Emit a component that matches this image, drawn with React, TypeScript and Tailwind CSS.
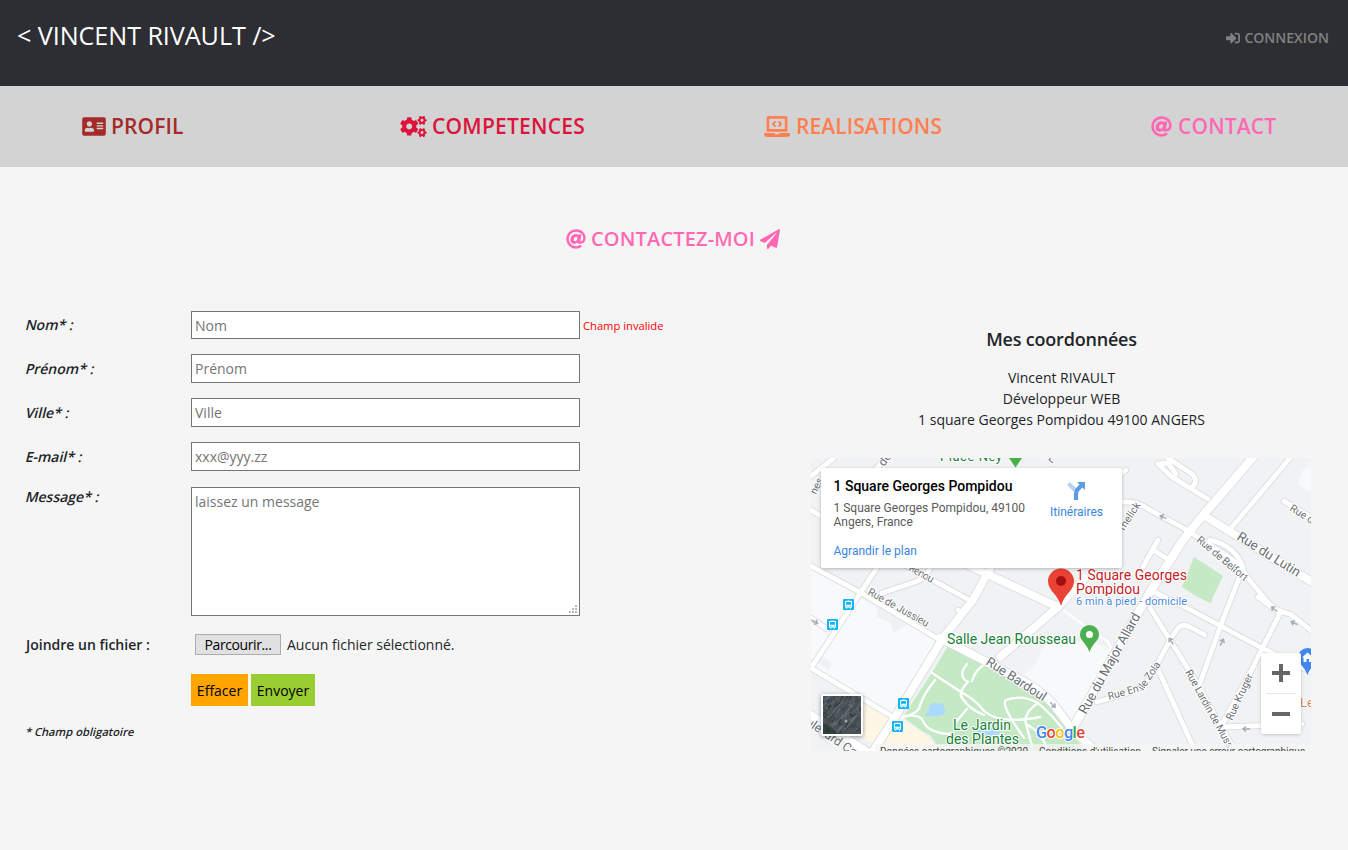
import React from "react";
import { FaAddressCard, FaCogs, FaLaptopCode, FaAt, FaPaperPlane, FaSignInAlt } from "react-icons/fa";

const minorRoads = [
  "M811 566 L865 595 L940 640",
  "M882 593 L915 582 Q924 579 927 574 L932 564",
  "M905 565 L971 601",
  "M811 510 L824 518",
  "M811 476 L834 458",
  "M868 478 L886 458",
  "M811 618 L827 629",
  "M1122 502 Q1138 501 1150 510 L1187 530",
  "M1187 530 L1230 558 Q1242 567 1247 577 L1266 600 Q1274 611 1290 614 L1312 631",
  "M1210 540 Q1236 546 1243 568 L1222 622 L1200 683",
  "M1158 540 L1143 567",
  "M1153 550 L1168 559",
  "M1158 464 L1172 477 L1208 499",
  "M1158 464 L1168 463 L1176 474",
  "M1168 458 L1192 474 Q1199 481 1192 487",
  "M1150 590 L1187 608 L1260 647 L1312 672",
  "M1150 608 L1170 640 L1197 683 L1222 728 L1235 751",
  "M1170 640 L1152 674 Q1144 689 1124 694 L1097 702",
  "M1157 667 L1195 751",
  "M1170 640 L1178 628 Q1183 623 1190 627 L1205 635",
  "M1280 613 L1250 673 L1223 723",
  "M1223 727 L1302 724",
  "M1258 597 L1280 613",
  "M1284 501 L1312 518",
  "M1126 470 L1112 482",
  "M958 610 L963 613",
  "M1232 527 L1290 458",
  "M882 560 L811 668",
  "M811 668 L893 717",
];

const majorRoads = [
  "M872 753 L897 714 L943 638 Q968 606 973 600 L992 565",
  "M811 715 L872 755",
  "M940 638 L985 661 L1025 682 Q1048 695 1060 713 L1072 729 L1100 755",
  "M955 559 L1058 607",
  "M1000 657 L1058 607 L1085 578",
  "M1203 515 L1312 582",
];

const mainRoad = "M1255 455 L1199 520 L1183 540 L1150 592 L1074 726";

const parkPaths = [
  "M932 673 L961 692 Q975 699 984 711 Q1000 725 1040 717",
  "M903 717 Q920 713 920 705 Q925 692 935 680",
  "M901 717 Q920 713 923 721 Q928 733 950 734",
  "M967 664 Q957 676 968 682 Q958 692 962 698 Q970 710 984 715",
  "M986 664 Q976 668 972 681",
  "M967 709 L955 723",
  "M1024 738 Q1000 704 1006 700 Q1022 694 1038 703 Q1052 715 1062 728",
  "M1038 703 Q1023 713 1026 724 Q1042 732 1048 751",
  "M1026 724 L1032 746",
];

const arrows = [
  [1163, 517, 205],
  [1274, 609, 220],
  [1294, 623, 205],
  [1171, 641, 235],
  [1222, 642, 297],
  [1246, 729, 180],
  [1053, 705, 45],
  [815, 622, 30],
];

function StreetMap() {
  return (
    <svg className="block h-full w-full" viewBox="811 458 500 293" fontFamily="Roboto, sans-serif">
      <rect x="811" y="458" width="500" height="293" fill="#f0f2f4" />
      <path d="M811 566 L940 638 L893 715 L811 666Z" fill="#f8f9fb" />
      <path d="M850 593 L878 608 L876 618 L890 622 L894 633 L914 620 L940 638 L865 590Z M822 657 L831 662 L829 670 L818 663Z" fill="#f0f1f3" />
      <path d="M1044 645 L1090 640 L1112 650 L1072 722 L1020 678 L1036 664Z M1302 471 L1312 462 V493 L1298 484Z" fill="#f8f9fb" />
      <path d="M864 703 L892 720 L874 744 L858 735Z M900 718 L925 734 L940 751 H876Z" fill="#fef7e5" />
      <path
        d="M948 646 L987 663 Q1008 672 1020 688 Q1040 695 1052 707 L1064 723 L1085 751 H985 L936 744 L930 735 L923 732 L903 717 L935 668Z"
        fill="#c5e8c5"
      />
      <path d="M1194 557 L1223 576 L1210 603 L1196 596 L1182 587 L1187 575Z M1205 600 L1212 600 L1211 603Z" fill="#c5e8c5" />
      <path d="M929 706 Q932 701 938 704 L943 703 L944 708 L946 711 L943 715 Q935 717 926 716 Q925 713 929 711Z M977 731 L985 727 L1001 730 L998 735 L980 736Z" fill="#aadaff" />
      <g fill="none" stroke="#ffffff" strokeWidth="2.3" strokeLinecap="round">
        {parkPaths.map((d) => <path key={d} d={d} />)}
      </g>
      <path d="M1063 610 L1102 638 Q1112 642 1110 651" fill="none" stroke="#fff" strokeWidth="2" />
      <g fill="none" stroke="#dbdde1" strokeLinecap="round" strokeLinejoin="round">
        {minorRoads.map((d) => <path key={d} d={d} strokeWidth="6.6" />)}
        {majorRoads.map((d) => <path key={d} d={d} strokeWidth="9.6" />)}
        <path d={mainRoad} strokeWidth="10" />
      </g>
      <g fill="none" stroke="#ffffff" strokeLinecap="round" strokeLinejoin="round">
        {minorRoads.map((d) => <path key={d} d={d} strokeWidth="4.8" />)}
        {majorRoads.map((d) => <path key={d} d={d} strokeWidth="7.8" />)}
        <path d={mainRoad} strokeWidth="8.4" />
      </g>
      {arrows.map(([x, y, a]) => (
        <path
          key={`${x}-${y}`}
          d="M-4 0 H2 M0 -2.5 L3 0 L0 2.5"
          transform={`translate(${x} ${y}) rotate(${a})`}
          fill="none"
          stroke="#a5adb7"
          strokeWidth="1.5"
        />
      ))}
      <g fill="#6b7075" stroke="#fff" strokeWidth="2" paintOrder="stroke" fontSize="10.5">
        <text transform="translate(867 594) rotate(29)" textLength="68">Rue de Jussieu</text>
        <text transform="translate(908 570) rotate(29)" textLength="27">Renou</text>
        <text transform="translate(1196 541) rotate(40)" textLength="63">Rue de Belfort</text>
        <text transform="translate(1236 539) rotate(32)" fontSize="13.5" textLength="72">Rue du Lutin</text>
        <text transform="translate(1289 510) rotate(32)">Rue du</text>
        <text transform="translate(1124 531) rotate(-57)" textLength="31">melick</text>
        <text transform="translate(884 467) rotate(-54)" fontSize="12">de</text>
        <text transform="translate(816 495) rotate(-64)">nes</text>
        <text transform="translate(1052 464) rotate(-48)">r</text>
        <text transform="translate(985 664) rotate(33)" fontSize="13" textLength="69">Rue Bardoul</text>
        <text transform="translate(1086 715) rotate(-61)" fontSize="13.5" textLength="113">Rue du Major Allard</text>
        <text transform="translate(1109 700) rotate(-16)" textLength="35">Rue Em</text>
        <text transform="translate(1143 691) rotate(-56)" textLength="32">ile Zola</text>
        <text transform="translate(1185 672) rotate(61)" textLength="88">Rue Lardin de Muss</text>
        <text transform="translate(1232 721) rotate(-65)" textLength="50">Rue Kruger</text>
        <text transform="translate(805 724) rotate(34)" fontSize="12.5" textLength="70">ulevard Carn</text>
      </g>
      <g fill="#188038" stroke="#fff" strokeWidth="2" paintOrder="stroke" fontSize="14">
        <text x="940" y="461" fontSize="13" textLength="62">Place Ney</text>
        <text x="947" y="644" textLength="129">Salle Jean Rousseau</text>
        <text x="953" y="730" textLength="58">Le Jardin</text>
        <text x="946" y="744" textLength="73">des Plantes</text>
      </g>
      <path d="M1009 458 L1015.500 467.500 L1022 458Z" fill="#48b248" />
      <path d="M1089.500 652 C1086.500 643 1080 641 1080 634.500 A9.500 9.500 0 0 1 1099 634.500 C1099 641 1092.500 643 1089.500 652Z" fill="#4caf50" />
      <circle cx="1089.500" cy="634.500" r="3.500" fill="#fff" />
      <path d="M1061 606 C1058 594 1048 591 1048 581 A13 12.500 0 0 1 1074 581 C1074 591 1064 594 1061 606Z" fill="#ea4335" />
      <circle cx="1061" cy="581" r="5" fill="#a50e0e" />
      <g stroke="#fff" strokeWidth="2" paintOrder="stroke">
        <g fill="#c5221f" fontSize="14">
          <text x="1076" y="580" textLength="111">1 Square Georges</text>
          <text x="1076" y="594" textLength="64">Pompidou</text>
        </g>
        <text x="1076" y="605" fill="#4a86dd" fontSize="11" textLength="111">6 min à pied - domicile</text>
        <text x="1300" y="707" fill="#dd7f52" fontSize="13">Le</text>
      </g>
      {[[848.5, 604.5], [832.5, 624.5], [903.5, 703.5], [897.5, 726.5]].map(([x, y]) => (
        <g key={`${x}-${y}`} transform={`translate(${x} ${y})`}>
          <rect x="-5.500" y="-5.500" width="11" height="11" rx="1" fill="#12b5f5" />
          <path d="M-3.500 -2.500 Q-3.500 -4 0 -4 Q3.500 -4 3.500 -2.500 V3 H2.500 V4 H1.200 V3 H-1.200 V4 H-2.500 V3 H-3.500Z" fill="#fff" />
          <path d="M-2.500 -2.500 H2.500 V0.200 H-2.500Z M-2.400 1.200 H-1.200 V2.200 H-2.400Z M1.200 1.200 H2.400 V2.200 H1.200Z" fill="#12b5f5" />
        </g>
      ))}
      <path d="M1307.500 675 C1304.500 666 1298 664 1298 657.500 A9.500 9.500 0 0 1 1317 657.500 C1317 664 1310.500 666 1307.500 675Z" fill="#4285f4" />
      <path d="M1302 657.500 L1307.500 652.500 L1313 657.500 H1311.500 V662 H1309 V659 H1306.500 V662 H1303.500 V657.500Z" fill="#fff" />
      <text x="1036" y="738" fontSize="16.500" fontWeight="500" stroke="#fff" strokeWidth="2" paintOrder="stroke" textLength="49">
        <tspan fill="#4285f4">G</tspan><tspan fill="#ea4335">o</tspan><tspan fill="#fbbc05">o</tspan><tspan fill="#4285f4">g</tspan><tspan fill="#34a853">l</tspan><tspan fill="#ea4335">e</tspan>
      </text>
      <rect x="875" y="744" width="436" height="7" fill="#f5f5f5" opacity=".75" />
      <g fill="#444" fontSize="10">
        <text x="880" y="755" textLength="148">Données cartographiques ©2020</text>
        <text x="1039" y="755" textLength="102">Conditions d'utilisation</text>
        <text x="1152" y="755" textLength="153">Signaler une erreur cartographique</text>
      </g>
    </svg>
  );
}

function SatelliteThumb() {
  const cells = Array.from({ length: 190 }, (_, i) => i);
  const colors = ["#4a5256", "#5c6269", "#363f42", "#666c74", "#3d4748", "#50575f", "#303a36"];
  return (
    <svg className="h-full w-full" viewBox="0 0 38 38">
      <rect width="38" height="38" fill="#4b5358" />
      {cells.map((i) => (
        <path
          key={i}
          d={`M${((i * 17) % 41) - 2} ${(i * 29 + ((i * i) % 7)) % 40} l${3 + (i % 3)} ${i % 4 === 0 ? 3 : -4}`}
          stroke={colors[(i * 5 + (i % 3)) % 7]}
          strokeWidth={i % 3 === 0 ? 1.6 : 0.9}
        />
      ))}
      <path d="M20 5 L5 22 M32 6 L12 29 M37 16 L19 36" stroke="#7b828a" strokeWidth=".7" />
      <path d="M0 27 L8 31 L15 38 H0Z" fill="#25372b" opacity=".7" />
      <circle cx="23" cy="25" r="1.500" fill="#a3a9aa" />
    </svg>
  );
}

const fields = [
  { label: "Nom* :", placeholder: "Nom", error: "Champ invalide" },
  { label: "Prénom* :", placeholder: "Prénom" },
  { label: "Ville* :", placeholder: "Ville" },
  { label: "E-mail* :", placeholder: "xxx@yyy.zz" },
];

export default function App() {
  return (
    <div className="h-[850px] w-[1348px] overflow-hidden bg-[#f5f5f5] font-['Open_Sans',sans-serif] text-[14px] leading-[21px] text-[#212529]">
      <header className="flex h-[86px] items-start justify-between bg-[#2d2e33] pr-[19px] pl-[17px]">
        <div className="pt-[16px] text-[25.2px] leading-[38px] tracking-[-0.08px] text-white">&lt; VINCENT RIVAULT /&gt;</div>
        <a className="flex items-center gap-1 pt-[27px] font-semibold text-[#808080]">
          <FaSignInAlt className="size-[14px]" />
          CONNEXION
        </a>
      </header>
      <nav className="flex h-[81px] items-center bg-[#d3d3d3] pl-[82px] text-[21px] font-semibold">
        <a className="flex w-[318px] items-center gap-[5px] text-[#a52a2a]">
          <FaAddressCard className="h-[21px] w-[24px]" /><span className="tracking-[0.1px]">PROFIL</span>
        </a>
        <a className="flex w-[364px] items-center gap-[5px] text-[#dc143c]">
          <FaCogs className="h-[21px] w-[27px]" /><span className="tracking-[0.24px]">COMPETENCES</span>
        </a>
        <a className="flex w-[387px] items-center gap-[6px] text-[#ff7f50]">
          <FaLaptopCode className="h-[21px] w-[26px]" /><span className="tracking-[0.08px]">REALISATIONS</span>
        </a>
        <a className="flex items-center gap-[6px] text-[#ff69b4]">
          <FaAt className="size-[21px]" /><span className="tracking-[0.15px]">CONTACT</span>
        </a>
      </nav>
      <main>
        <h1 className="flex items-center justify-center gap-[5px] pt-[61px] pr-[2px] text-[20px] leading-[22px] font-semibold text-[#ff69b4]">
          <FaAt className="size-[20px]" /><span className="tracking-[0.15px]">CONTACTEZ-MOI</span><FaPaperPlane className="size-[20px]" />
        </h1>
        <div className="flex pt-[61px]">
          <form className="w-[811px] pl-[26px]">
            {fields.map((f) => (
              <div key={f.label} className={f.error ? "flex h-[43px] items-start" : "flex h-[44px] items-start"}>
                <label className={f.error ? "w-[165px] pt-[3px]" : "w-[165px] pt-[4px]"}>
                  <span className="inline-block -skew-x-14 font-semibold">{f.label}</span>
                </label>
                <input
                  className={
                    f.error
                      ? "h-[28px] w-[389px] border border-[#767676] bg-white px-[3px] placeholder:text-[#757575]"
                      : "h-[29px] w-[389px] border border-[#767676] bg-white px-[3px] placeholder:text-[#757575]"
                  }
                  placeholder={f.placeholder}
                />
                {f.error && <span className="pt-[4px] pl-[3px] text-[11.2px] text-[#ff0000]">{f.error}</span>}
              </div>
            ))}
            <div className="flex items-start">
              <label className="w-[165px]">
                <span className="inline-block -skew-x-14 font-semibold">Message* :</span>
              </label>
              <div className="relative mt-[1px] h-[129px] w-[389px]">
                <textarea
                  className="h-full w-full resize-none border border-[#767676] bg-white px-[3px] py-[3px] placeholder:text-[#757575]"
                  placeholder="laissez un message"
                />
                <svg className="absolute right-[3px] bottom-[3px] size-[8px]" viewBox="0 0 8 8" fill="#b8b8b8">
                  <path d="M6 0h2v2H6zM3 3h2v2H3zM6 3h2v2H6zM0 6h2v2H0zM3 6h2v2H3zM6 6h2v2H6z" />
                </svg>
              </div>
            </div>
            <div className="flex h-[58px] items-start pt-[18px]">
              <label className="w-[169px] font-semibold">Joindre un fichier :</label>
              <button type="button" className="flex h-[21px] w-[86px] items-center justify-center border border-[#adadad] bg-[#e1e1e1] tracking-[-0.4px] text-black">Parcourir...</button>
              <span className="pl-[6px]">Aucun fichier sélectionné.</span>
            </div>
            <div className="flex gap-[3px] pl-[165px] text-black">
              <button type="button" className="h-[32px] w-[57px] bg-[#ffa500] pt-[1px]">Effacer</button>
              <button type="button" className="h-[32px] w-[64px] bg-[#9acd32] pt-[1px]">Envoyer</button>
            </div>
            <p className="pt-[15px] text-[11.2px] font-semibold"><span className="inline-block -skew-x-14">* Champ obligatoire</span></p>
          </form>
          <section className="w-[500px]">
            <div className="pt-[18px] pl-px text-center">
              <h2 className="text-[18px] leading-[21px] font-semibold tracking-[-0.2px]">Mes coordonnées</h2>
              <p className="pt-[17px]">Vincent RIVAULT<br />Développeur WEB<br />1 square Georges Pompidou 49100 ANGERS</p>
            </div>
            <div className="relative mt-[28px] h-[293px] w-[500px] overflow-hidden font-[Roboto,sans-serif]">
              <StreetMap />
              <div className="absolute top-[10px] left-[10px] flex h-[100px] w-[301px] justify-between rounded-[2px] bg-white pt-[10px] pr-[19px] pl-[12.5px] shadow-[0_1px_4px_-1px_rgba(0,0,0,0.4)]">
                <div className="text-[12px] leading-[14px] text-[#5b5b5b]">
                  <div className="text-[14px] leading-[17px] font-medium text-black">1 Square Georges Pompidou</div>
                  <p className="w-[200px] pt-[6px]">1 Square Georges Pompidou, 49100 Angers, France</p>
                  <a className="block pt-[15px] text-[#3a84df]">Agrandir le plan</a>
                </div>
                <div className="flex flex-col items-center pt-[3px] text-[12px] leading-[14px] text-[#3a84df]">
                  <svg className="-ml-px h-[20px] w-[20px]" viewBox="0 0 20 20" fill="none">
                    <path d="M2.500 2.500 L10 10" stroke="#b7d1f6" strokeWidth="4" />
                    <path d="M10 19 V13 Q10 10 12 8 L15.500 4.500" stroke="#5c9ae6" strokeWidth="4.200" />
                    <path d="M11 1 H19 V9Z" fill="#5c9ae6" />
                  </svg>
                  <span className="pt-[4px]">Itinéraires</span>
                </div>
              </div>
              <div className="absolute top-[236px] left-[10px] size-[42px] rounded-[2px] border-2 border-white bg-white shadow-[0_1px_4px_rgba(0,0,0,0.4)]"><SatelliteThumb /></div>
              <div className="absolute top-[195px] left-[450px] h-[81px] w-[40px] rounded-[2px] bg-white shadow-[0_1px_4px_-1px_rgba(0,0,0,0.3)]">
                <svg className="h-full w-full" viewBox="0 0 40 81">
                  <path d="M11 20 H29 M20 11 V29 M11 61 H29" stroke="#666" strokeWidth="4" />
                  <path d="M5 40.500 H35" stroke="#e6e6e6" />
                </svg>
              </div>
            </div>
          </section>
        </div>
      </main>
    </div>
  );
}
